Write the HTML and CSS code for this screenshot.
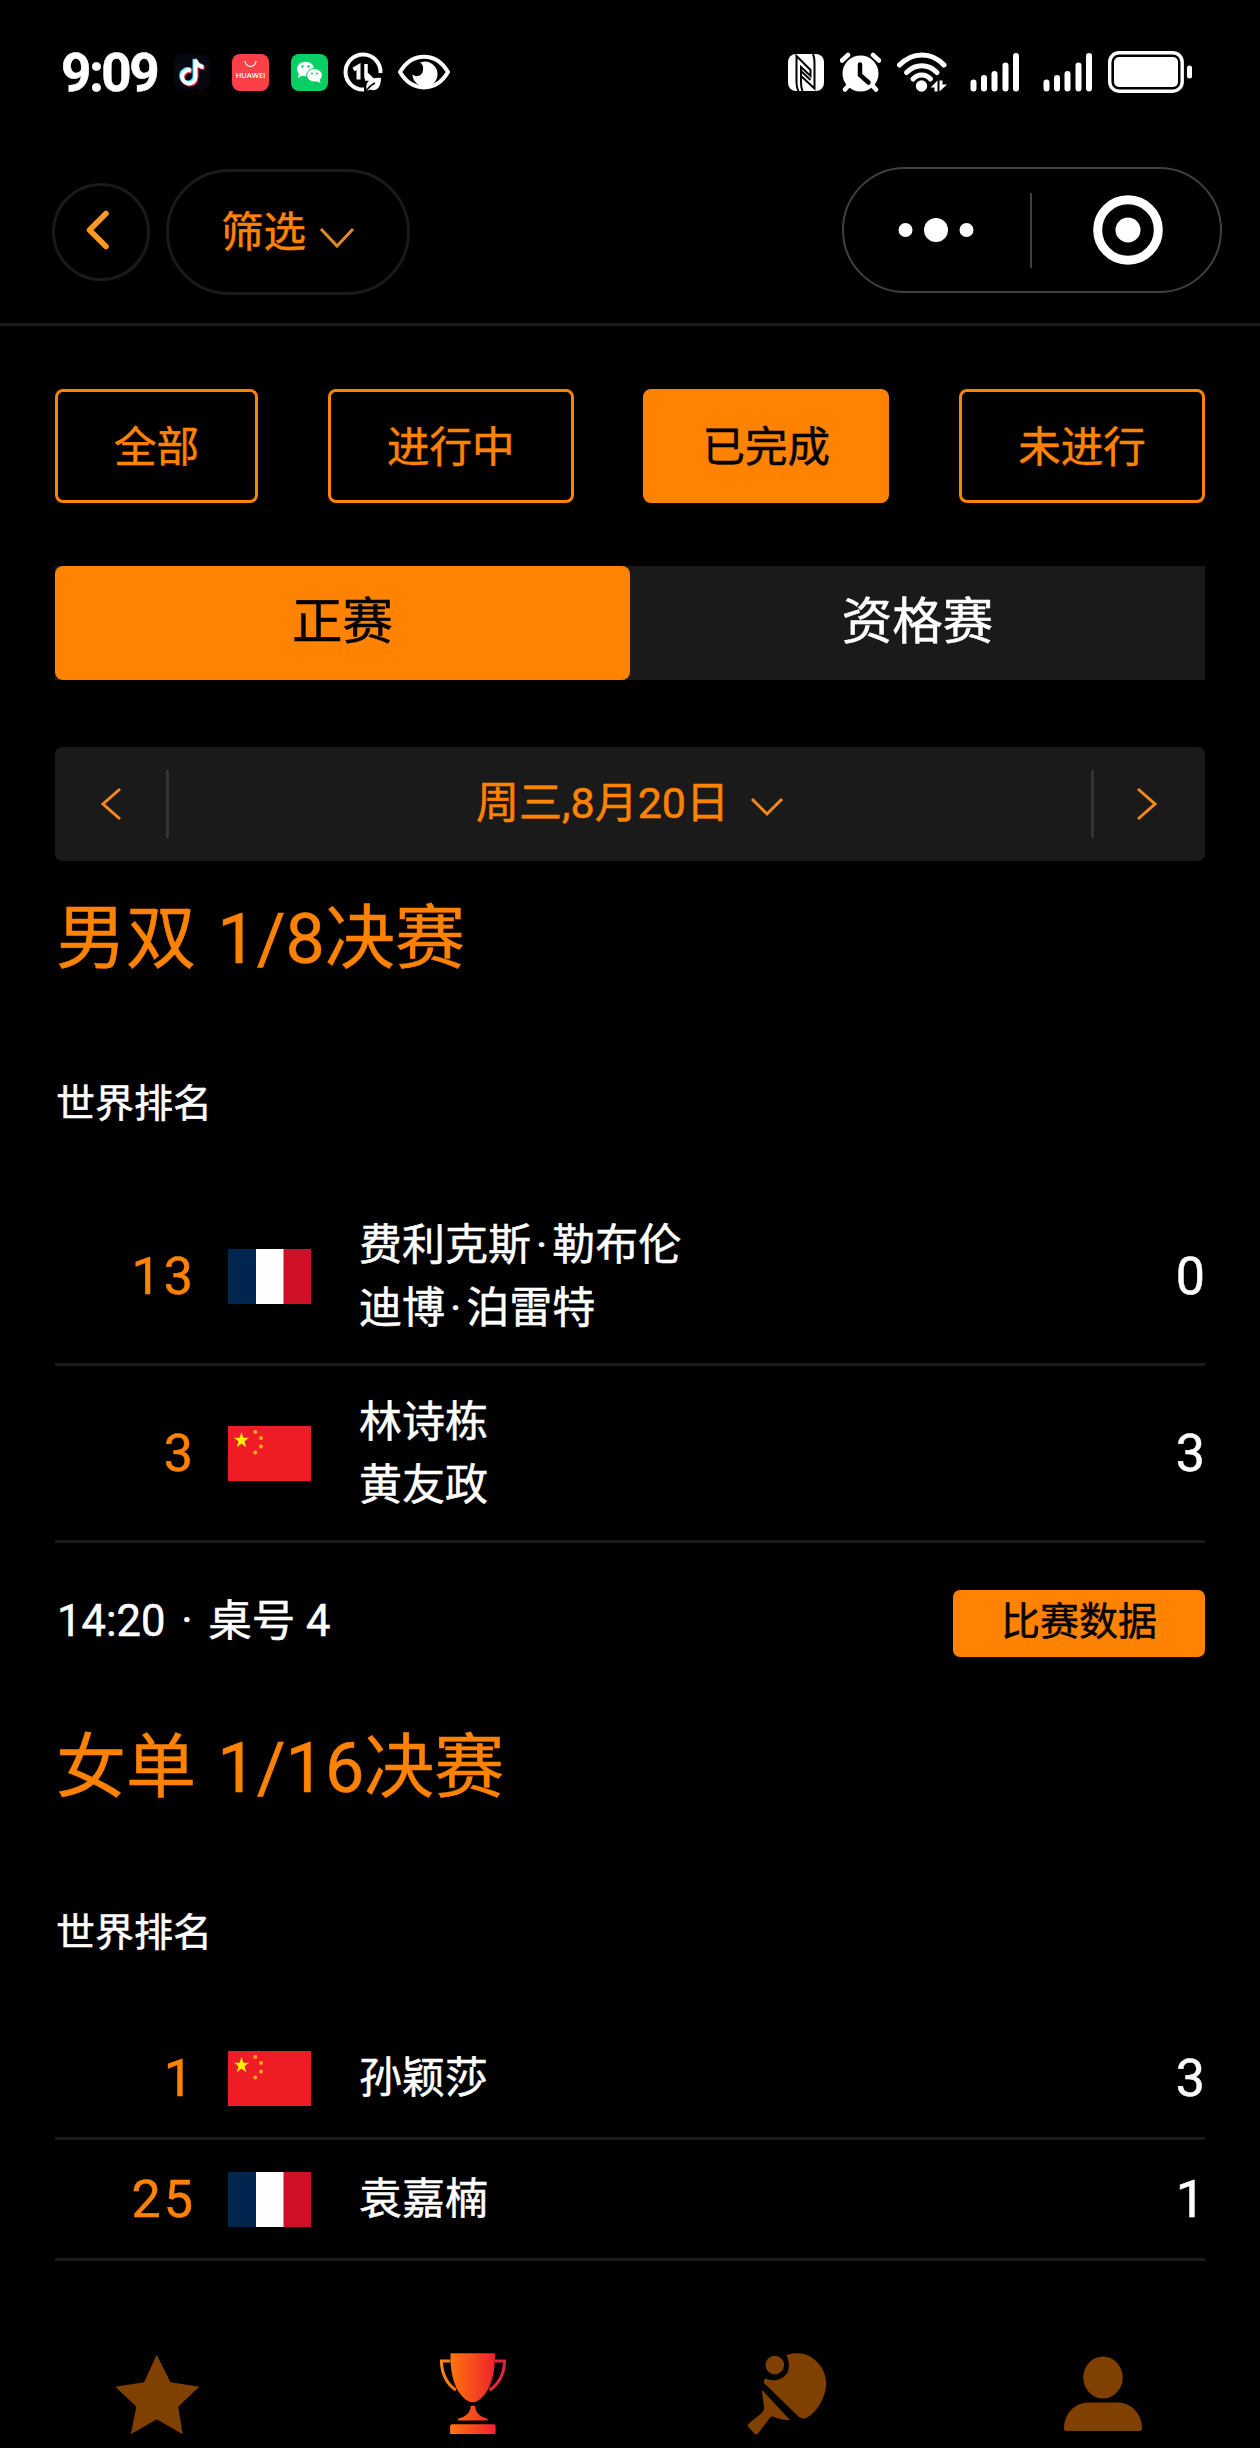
FILE: index.html
```html
<!DOCTYPE html>
<html lang="zh-CN">
<head>
  <meta charset="UTF-8" />
  <meta name="viewport" content="width=device-width, initial-scale=1.0"/>
  <title>赛程</title>
  <link rel="stylesheet" href="styles.css">
</head>
<body>
  <svg class="defs" width="0" height="0">
    <symbol id="flag-fr" viewBox="0 0 83 55" preserveAspectRatio="none">
      <rect width="28" height="55" fill="#00264f"/>
      <rect x="28" width="28" height="55" fill="#fff"/>
      <rect x="55.5" width="27.5" height="55" fill="#ce1127"/>
    </symbol>
    <symbol id="flag-cn" viewBox="0 0 83 55" preserveAspectRatio="none">
      <rect width="83" height="55" fill="#ee1c25"/>
      <path fill="#ffef00" d="M13.500 6l1.900 5.700h5.600l-4.500 3.500 1.700 6-4.700-3.600-4.700 3.600 1.700-6L6 11.700h5.600z"/>
      <g fill="#f5a81c">
        <circle cx="27.300" cy="6" r="2"/>
        <circle cx="33" cy="12" r="2"/>
        <circle cx="33" cy="20.500" r="2"/>
        <circle cx="27.300" cy="26.500" r="2"/>
      </g>
    </symbol>
    <symbol id="signal" viewBox="0 0 50 40">
      <path d="M3.500 30.500v6M14 26v10.500M24.500 22v14.500M35.500 13.500v23M46 4v32.500" stroke="#fff" stroke-width="6" stroke-linecap="round"/>
    </symbol>
  </svg>

  <div class="status-bar">
    <div class="status-left">
      <span class="clock">9:09</span>
      <svg class="tiktok" width="36" height="36" viewBox="0 0 36 36">
        <rect width="36" height="36" rx="8" fill="#060711"/>
        <g fill="none" stroke-width="4">
          <path stroke="#25f4ee" d="M16 15.500a6.700 6.700 0 1 0 4.500 6.500V5c1 4 3.500 6.500 8 7"/>
          <path stroke="#fe2c55" d="M18 17.500a6.700 6.700 0 1 0 4.500 6.500V7c1 4 3.500 6.500 8 7"/>
          <path stroke="#fff" d="M17 16.500a6.700 6.700 0 1 0 4.500 6.500V6c1 4 3.500 6.500 8 7"/>
        </g>
      </svg>
      <svg class="huawei" width="37" height="37" viewBox="0 0 37 37">
        <rect width="37" height="37" rx="8" fill="#fb4049"/>
        <path d="M13 7a5.500 5.500 0 0 0 11 0" fill="none" stroke="#fff" stroke-width="1.200"/>
        <text class="huawei-text" x="18.500" y="24" text-anchor="middle">HUAWEI</text>
      </svg>
      <svg class="wechat" width="37" height="37" viewBox="0 0 37 37">
        <rect width="37" height="37" rx="8" fill="#06cf63"/>
        <ellipse cx="14.500" cy="15" rx="8.500" ry="7.300" fill="#fff"/>
        <path d="M8 19l-1 5 5-3z" fill="#fff"/>
        <ellipse cx="23.500" cy="21.300" rx="7.800" ry="6.800" fill="#fff" stroke="#06cf63"/>
        <path d="M25 27l4.500 2-1-4z" fill="#fff"/>
        <g fill="#06cf63">
          <circle cx="11.500" cy="12.500" r="1.200"/><circle cx="17.500" cy="12.500" r="1.200"/>
          <circle cx="21" cy="19.500" r="1"/><circle cx="26" cy="19.500" r="1"/>
        </g>
      </svg>
      <svg class="eco" width="40" height="40" viewBox="0 0 40 40" fill="none" stroke="#fff">
        <path d="M21 37.500A17.500 17.500 0 1 1 37.500 21" stroke-width="4"/>
        <path d="M10.500 17.500l5-3V27.500" stroke-width="4"/>
        <path d="M23 12v14.500M22 20.500l7 6.500h-7" stroke-width="3.500"/>
        <path d="M24 39c-3-9 4-14 14-13 0 10-5 14-11 11.500z" fill="#fff" stroke="none"/>
        <path d="M23 40c2-5 5-7 9-9" stroke="#000" stroke-width="1.500"/>
      </svg>
      <svg class="eye" width="52" height="36" viewBox="0 0 52 36">
        <path d="M2 18C14-2.500 38-2.500 50 18 38 38.500 14 38.500 2 18z" fill="none" stroke="#fff" stroke-width="4"/>
        <path d="M24 8a12.500 12.500 0 1 1-9.500 12c2 3.500 9.500 3 10.500-3.500.6-4-.5-6.500-3-8z" fill="#fff"/>
      </svg>
    </div>
    <div class="status-right">
      <svg width="36" height="37" viewBox="0 0 36 37">
        <rect width="36" height="37" rx="8" fill="#fff"/>
        <path d="M10.500 37c-2-3-2-5-2-9V2L22.500 16V22L13 13V28c0 4 0 6 1.500 9M25 0c1.500 3 1.500 5 1.500 9v25.500L13 22v-5l9.500 9" fill="none" stroke="#000" stroke-width="2"/>
      </svg>
      <svg class="alarm" width="41" height="40" viewBox="0 0 41 40">
        <circle cx="20.500" cy="21.500" r="18" fill="#fff"/>
        <path d="M2 8.500L8 3M39 8.500L33 3M9 33l-4 4.500M32 33l4 4.500" stroke="#fff" stroke-width="4.500" stroke-linecap="round"/>
        <path d="M20 12.500V23l8.500 7.500" fill="none" stroke="#000" stroke-width="4.500" stroke-linecap="round"/>
      </svg>
      <svg class="wifi" width="50" height="40" viewBox="0 0 50 40">
        <g fill="none" stroke="#fff" stroke-width="5" stroke-linecap="round">
          <path d="M2.500 13c13-13.500 32-13.500 44.500 0"/>
          <path d="M9.500 20.500c9-9 21.500-9 30.500 0"/>
          <path d="M16 27c5-5.500 12.500-5.500 17.500 0"/>
        </g>
        <circle cx="24.500" cy="34" r="5.700" fill="#fff"/>
        <path d="M33.500 35.500h4V39.500h3V28.500zM42.500 28.500h3v4h4.500l-7.500 7z" fill="#fff"/>
      </svg>
      <svg class="signal" width="50" height="40"><use href="#signal"/></svg>
      <svg class="signal" width="50" height="40"><use href="#signal"/></svg>
      <svg class="battery" width="85" height="42" viewBox="0 0 85 42">
        <rect x="1.700" y="1.700" width="72.500" height="38.500" rx="9.500" fill="none" stroke="#fff" stroke-width="3.400"/>
        <rect x="6" y="6" width="64" height="30" rx="5" fill="#fff"/>
        <rect x="79" y="14.500" width="5" height="13" rx="2.500" fill="#fff"/>
      </svg>
    </div>
  </div>

  <header class="header">
    <button class="back">
      <svg width="26" height="42" viewBox="0 0 26 42"><path d="M21 4.500L4.500 21 21 37.500" fill="none" stroke="#ff9a1f" stroke-width="5.500" stroke-linecap="round" stroke-linejoin="round"/></svg>
    </button>
    <button class="filter-btn">
      <span>筛选</span>
      <svg width="36" height="22" viewBox="0 0 36 22"><path d="M2 2l16 17L34 2" fill="none" stroke="#e08a26" stroke-width="3"/></svg>
    </button>
    <div class="capsule">
      <div class="capsule-half dots">
        <svg width="76" height="24" viewBox="0 0 76 24" fill="#fff"><circle cx="7.500" cy="12" r="7"/><circle cx="38" cy="12" r="12"/><circle cx="68.500" cy="12" r="7"/></svg>
      </div>
      <div class="capsule-line"></div>
      <div class="capsule-half ring">
        <svg width="70" height="70" viewBox="0 0 70 70"><circle cx="35" cy="35" r="30.300" fill="none" stroke="#fff" stroke-width="9"/><circle cx="35" cy="35" r="12.500" fill="#fff"/></svg>
      </div>
    </div>
  </header>

  <main class="content">
    <div class="filters">
      <button class="filter">全部</button>
      <button class="filter">进行中</button>
      <button class="filter active">已完成</button>
      <button class="filter">未进行</button>
    </div>

    <div class="tabs">
      <button class="tab active">正赛</button>
      <button class="tab">资格赛</button>
    </div>

    <div class="date-bar">
      <button class="date-arrow">
        <svg width="22" height="34" viewBox="0 0 22 34"><path d="M20 2L3 17l17 15" fill="none" stroke="#f58a1c" stroke-width="3"/></svg>
      </button>
      <div class="date">
        <span>周三,8月20日</span>
        <svg width="34" height="20" viewBox="0 0 34 20"><path d="M2 2l15 15L32 2" fill="none" stroke="#f58a1c" stroke-width="3"/></svg>
      </div>
      <button class="date-arrow next">
        <svg width="22" height="34" viewBox="0 0 22 34"><path d="M2 2l17 15L2 32" fill="none" stroke="#f58a1c" stroke-width="3"/></svg>
      </button>
    </div>

    <section class="match">
      <h2>男双 1/8决赛</h2>
      <div class="label">世界排名</div>
      <div class="players doubles">
        <div class="row">
          <span class="rank">13</span>
          <svg class="flag"><use href="#flag-fr"/></svg>
          <div class="names">费利克斯<i>·</i>勒布伦<br>迪博<i>·</i>泊雷特</div>
          <span class="score">0</span>
        </div>
        <div class="row">
          <span class="rank">3</span>
          <svg class="flag"><use href="#flag-cn"/></svg>
          <div class="names">林诗栋<br>黄友政</div>
          <span class="score">3</span>
        </div>
      </div>
      <div class="match-footer">
        <span class="time">14:20 <i>·</i> 桌号 4</span>
        <button class="data-btn">比赛数据</button>
      </div>
    </section>

    <section class="match">
      <h2>女单 1/16决赛</h2>
      <div class="label">世界排名</div>
      <div class="players singles">
        <div class="row">
          <span class="rank">1</span>
          <svg class="flag"><use href="#flag-cn"/></svg>
          <div class="names">孙颖莎</div>
          <span class="score">3</span>
        </div>
        <div class="row">
          <span class="rank">25</span>
          <svg class="flag"><use href="#flag-fr"/></svg>
          <div class="names">袁嘉楠</div>
          <span class="score">1</span>
        </div>
      </div>
    </section>
  </main>

  <nav class="tab-bar">
    <a><svg width="85" height="84" viewBox="0 0 85 84"><path fill="#804000" d="M41.700 2.700l13.800 27.600 28.700 4.400-21 20 4.500 27.600-26-15-26 15 5.700-27.600-21-20 28.700-4.400z"/></svg></a>
    <a><svg width="68" height="84" viewBox="0 0 68 84">
      <defs>
        <linearGradient id="cup" gradientUnits="userSpaceOnUse" x1="0" y1="0" x2="68" y2="0">
          <stop offset="0" stop-color="#ff8a1c"/>
          <stop offset=".25" stop-color="#fc6a10"/>
          <stop offset=".8" stop-color="#f0252c"/>
          <stop offset="1" stop-color="#e01f4a"/>
        </linearGradient>
      </defs>
      <path fill="url(#cup)" d="M11.500 1.300h44.400c.5 26-7 41-17 47.500q-5 3-10.400 0C18 42 11 27 11.500 1.300zM31.800 53.700h4.200c.5 6 4 11 12.600 13v1.800H19.100v-1.800c8.500-2 12.500-7 12.700-13zM13 72.300h42q1.600 0 1.600 1.600V82H11.100v-8.100q0-1.600 1.900-1.600z"/>
      <path fill="none" stroke="url(#cup)" stroke-width="3" d="M11.500 9H2.500c0 13 6 24 14.500 29M56 9h9.500c0 13-6.500 24-15 29"/>
    </svg></a>
    <a><svg width="82" height="84" viewBox="0 0 82 84" fill="#804000">
      <circle cx="27.800" cy="13" r="9.300"/>
      <path d="M39.300 3C50-.5 61 1 68.500 8.500 78 17 80.500 28 78.500 38 75.500 51 68.500 60 61 65c-4 2.500-6.500 1.500-9 0L17 31q-.5-3 1.200-4.700C26 30.500 37 28 41 19.500 43 13 41.500 7 39.300 3z"/>
      <path d="M15.200 38L43 68c-6 .500-11-1-17-3.500-2.500 0-3.500 1.500-5 4L10.500 82q-1.800 1.200-3.200-.5L1.500 75q-1.200-1.800.3-3.500L13 62.500c3.500-3 4.500-5 4-8-.5-6-2-10-1.800-16.500z"/>
    </svg></a>
    <a><svg width="80" height="84" viewBox="0 0 80 84" fill="#804000"><ellipse cx="40" cy="25.500" rx="19.700" ry="21"/><path d="M26 50.500h28c15 0 25 12 25 26q0 2.500-2.500 2.500h-73q-2.500 0-2.500-2.500c0-14 10-26 25-26z"/></svg></a>
  </nav>
</body>
</html>
```

FILE: styles.css
```css
* {
  box-sizing: border-box;
}

body {
  margin: 0;
  width: 1260px;
  height: 2448px;
  overflow: hidden;
  display: flex;
  flex-direction: column;
  background: #000;
  color: #fff;
  font-family: Roboto, 'Noto Sans CJK SC', sans-serif;
  -webkit-text-stroke: 0.5px;
}

button {
  margin: 0;
  padding: 0;
  border: none;
  background: none;
  font: inherit;
  color: #ff8200;
}

svg {
  display: block;
  flex-shrink: 0;
}

.defs {
  position: absolute;
}

/* status bar */
.status-bar {
  display: flex;
  justify-content: space-between;
  align-items: center;
  height: 144px;
  padding: 0 67px 0 61px;
}

.status-left,
.status-right {
  display: flex;
  align-items: center;
}

.clock {
  width: 113px;
  padding-top: 2px;
  font-size: 53px;
  font-weight: 700;
  letter-spacing: -2.5px;
}

.huawei,
.wechat {
  margin-left: 22px;
}

.huawei-text {
  font-family: 'Open Sans', sans-serif;
  font-size: 7.5px;
  font-weight: 600;
  fill: #fff;
  -webkit-text-stroke: 0;
}

.eco {
  margin-left: 15px;
}

.eye {
  margin-left: 15px;
}

.alarm {
  margin-left: 16px;
}

.wifi {
  margin-left: 16px;
}

.signal {
  margin-left: 23px;
}

.battery {
  margin-left: 15px;
}

/* header */
.header {
  display: flex;
  align-items: center;
  height: 182px;
  padding: 0 38px 4px 52px;
  border-bottom: 3px solid #1a1a1a;
}

.back {
  display: flex;
  align-items: center;
  justify-content: center;
  width: 98px;
  height: 98px;
  padding: 0 7px 3px 0;
  border: 3px solid #1a1a1a;
  border-radius: 50%;
}

.filter-btn {
  display: flex;
  align-items: center;
  justify-content: center;
  gap: 13px;
  width: 244px;
  height: 126px;
  margin-left: 16px;
  border: 3px solid #1a1a1a;
  border-radius: 63px;
  font-size: 42.5px;
  line-height: 60px;
}

.filter-btn span {
  padding-top: 3px;
}

.filter-btn svg {
  margin-top: 12px;
}

.capsule {
  display: flex;
  align-items: center;
  width: 380px;
  height: 126px;
  margin: -3px 0 0 auto;
  border: 2px solid #404040;
  border-radius: 63px;
}

.capsule-half {
  flex: 1;
  display: flex;
  justify-content: center;
}

.dots {
  padding-right: 2px;
}

.ring {
  padding-left: 5px;
}

.capsule-line {
  width: 2px;
  height: 75px;
  background: #404040;
}

/* filters */
.content {
  flex: 1;
  padding: 63px 55px 0;
}

.filters {
  display: flex;
  justify-content: space-between;
}

.filter {
  width: 246px;
  height: 114px;
  padding-top: 3px;
  border: 3px solid #ff8200;
  border-radius: 8px;
  font-size: 42.5px;
  line-height: 60px;
}

.filter:first-child {
  width: 203px;
}

.filter.active {
  background: #ff8200;
  color: #000;
}

.tabs {
  display: flex;
  height: 114px;
  margin-top: 63px;
  background: #1a1a1a;
}

.tab {
  flex: 1;
  padding-bottom: 3px;
  border-radius: 8px;
  font-size: 50.5px;
  line-height: 70px;
  color: #fff;
}

.tab.active {
  background: #ff8200;
  color: #000;
}

.date-bar {
  display: flex;
  align-items: center;
  height: 114px;
  margin-top: 67px;
  background: #1a1a1a;
  border-radius: 7px;
}

.date-arrow {
  display: flex;
  align-items: center;
  justify-content: center;
  width: 114px;
  height: 68px;
  border-right: 3px solid #333;
}

.date-arrow.next {
  padding-right: 5px;
  border-right: none;
  border-left: 3px solid #333;
}

.date {
  flex: 1;
  display: flex;
  align-items: center;
  justify-content: center;
  gap: 21px;
  font-size: 43px;
  line-height: 60px;
  color: #ff8200;
}

.date span {
  padding-bottom: 3px;
}

.date svg {
  margin-top: 6px;
}

/* matches */
.match {
  padding-top: 36px;
}

.match h2 {
  margin: 0 0 0 1px;
  font-size: 70px;
  font-weight: 400;
  line-height: 84px;
  word-spacing: 4px;
  color: #ff8200;
}

.label {
  margin: 95px 0 0 1px;
  font-size: 39px;
  line-height: 57px;
}

.players {
  margin-top: 56px;
}

.players.singles {
  margin-top: 57px;
}

.row {
  display: flex;
  align-items: center;
  height: 121px;
  border-bottom: 3px solid #1a1a1a;
}

.doubles .row {
  height: 177px;
}

.rank {
  width: 141px;
  text-align: right;
  font-size: 52px;
  line-height: 63px;
  letter-spacing: 3px;
  color: #ff8200;
}

.flag {
  width: 83px;
  height: 55px;
  margin-left: 32px;
}

.names {
  flex: 1;
  margin-left: 48px;
  padding-top: 1px;
  font-size: 43px;
  line-height: 63px;
}

i {
  margin: 0 5px;
  font-style: normal;
}

.score {
  font-size: 52px;
  line-height: 63px;
}

.match-footer {
  display: flex;
  align-items: center;
  justify-content: space-between;
  height: 147px;
  padding-top: 14px;
}

.time {
  padding: 0 0 3px 2px;
  font-size: 43.5px;
  line-height: 60px;
}

.data-btn {
  width: 252px;
  height: 67px;
  padding-bottom: 4px;
  background: #ff8200;
  border-radius: 7px;
  color: #000;
  font-size: 39px;
  line-height: 60px;
}

/* bottom navigation */
.tab-bar {
  display: flex;
  height: 96px;
}

.tab-bar a {
  flex: 1;
  display: flex;
  justify-content: center;
}
```
